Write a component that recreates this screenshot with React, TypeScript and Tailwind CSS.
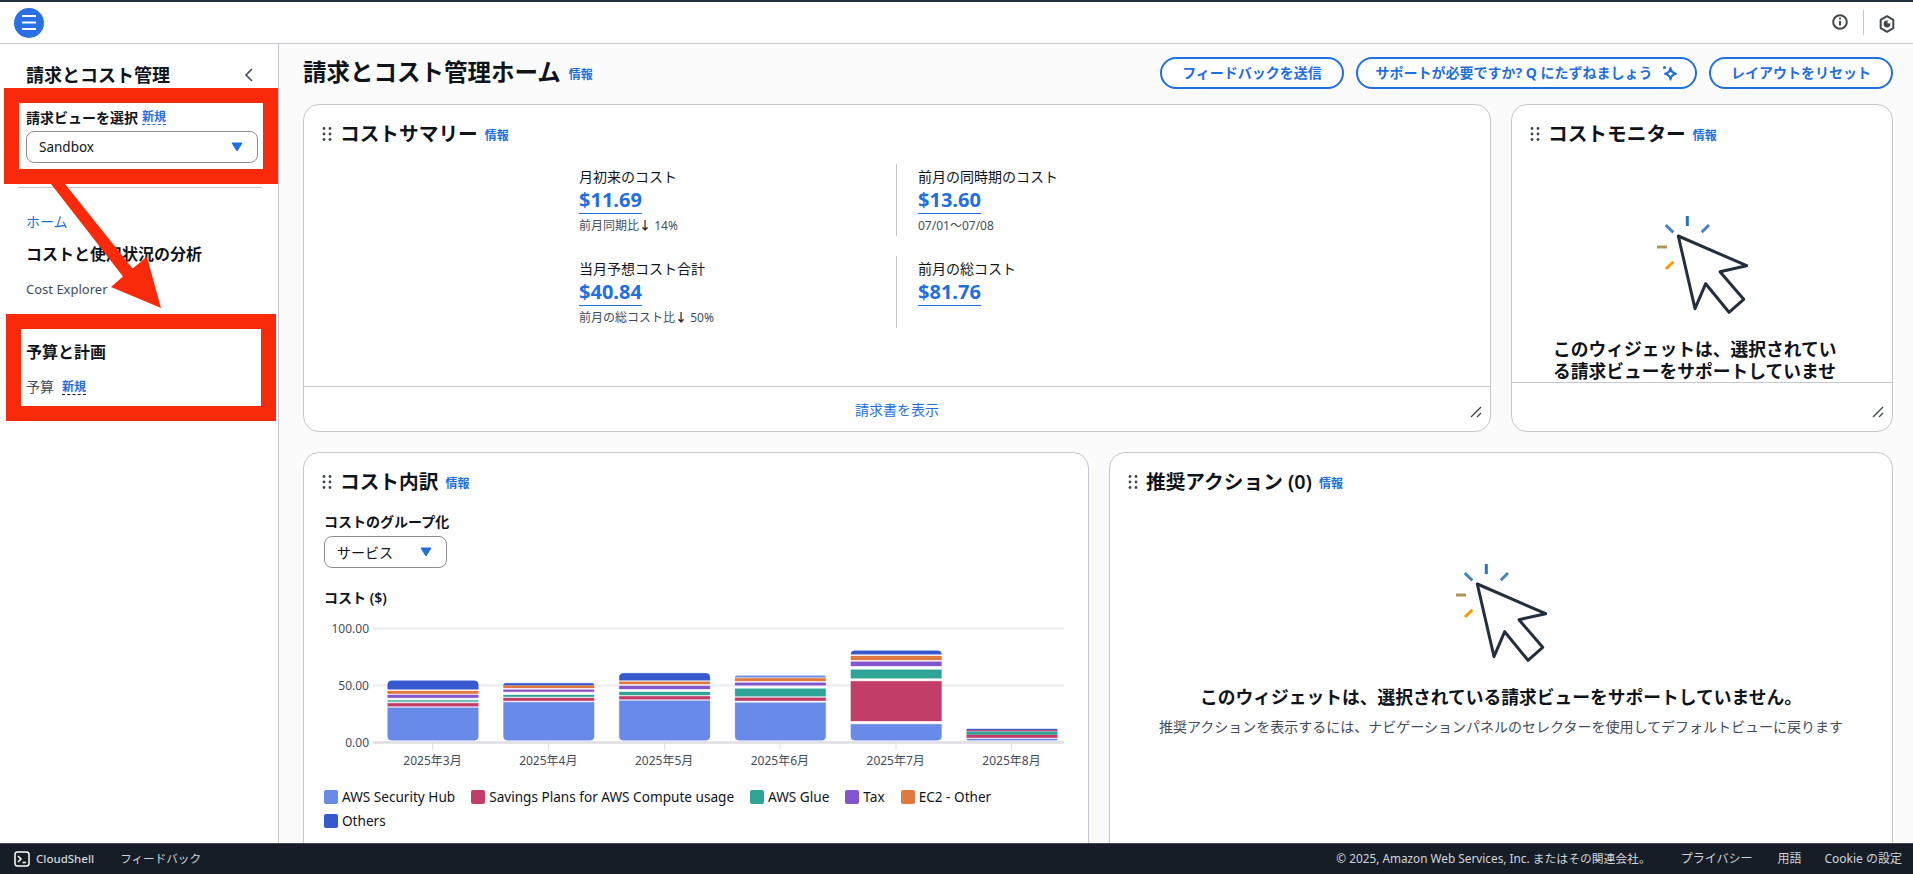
const JP = "font-['Noto_Sans','Noto_Sans_CJK_JP',sans-serif]";

function Dots() {
  return (
    <svg width="10" height="14" viewBox="0 0 10 14" className="shrink-0">
      {[1.5, 7, 12.5].map((y) => (
        <g key={y}>
          <circle cx="2" cy={y} r="1.4" fill="#424650" />
          <circle cx="8" cy={y} r="1.4" fill="#424650" />
        </g>
      ))}
    </svg>
  );
}

function Info({ className = "" }: { className?: string }) {
  return <span className={"text-[12px] font-bold leading-4 text-[#1f6fe0] " + className}>情報</span>;
}

function CardHead({ title }: { title: string }) {
  return (
    <div className="flex items-center pl-[18px] pt-[13px] h-[44px] shrink-0">
      <Dots />
      <h2 className="ml-[8px] text-[19.7px] leading-7 font-semibold text-[#0f141a]">{title}</h2>
      <Info className="ml-[7px] mt-[5px]" />
    </div>
  );
}

function Caret() {
  return (
    <svg width="12" height="10" viewBox="0 0 12 10">
      <path d="M1 1h10L6 9z" fill="#1f6fe0" stroke="#1f6fe0" strokeLinejoin="round" />
    </svg>
  );
}

function Resize() {
  return (
    <svg width="12" height="12" viewBox="0 0 12 12" className="absolute right-[8px] bottom-[13px]">
      <path d="M1 11L11 1M7 11l4-4" stroke="#424650" strokeWidth="1.4" fill="none" />
    </svg>
  );
}

function Clicker() {
  return (
    <svg width="92" height="100" viewBox="0 0 92 100" className="shrink-0">
      <path d="M31.3 1v10" stroke="#2374d1" strokeWidth="3" />
      <path d="M9.7 10l7.6 7.3M53 10l-7.3 7.3" stroke="#4a82c0" strokeWidth="3" />
      <path d="M1 32h10" stroke="#b0935e" strokeWidth="3" />
      <path d="M17.3 46.7L10 54" stroke="#ff9900" strokeWidth="3" />
      <path
        d="M22.3 21L90.7 50.7 64 56.7 87.7 84.3 73 97.3 49.7 68.7 39 93.7z"
        fill="none"
        stroke="#232f3e"
        strokeWidth="3"
        strokeLinejoin="round"
      />
    </svg>
  );
}

function Stat({ label, value, sub, arrow }: { label: string; value: string; sub?: string; arrow?: string }) {
  return (
    <div className="h-[72px] pt-[4px]">
      <div className="text-[14px] leading-[18px] text-[#0f141a]">{label}</div>
      <div className="flex">
        <div className="text-[20px] leading-[27px] font-bold text-[#1f6fe0] border-b-[1.5px] border-[#1f6fe0] h-[28px]">{value}</div>
      </div>
      {sub && (
        <div className="text-[12px] leading-4 mt-[4px] text-[#414d5c]">
          {sub}
          {arrow && <span className="font-bold text-[#232f3e]">↓</span>}
          {arrow}
        </div>
      )}
    </div>
  );
}

type Seg = [string, number, number];
const C = { s: "#688ae8", r: "#c33d69", t: "#2ea597", p: "#8456ce", o: "#e07941", b: "#3759ce" };
const bars: { x: number; w: number; segs: Seg[] }[] = [
  { x: 387.7, w: 90.6, segs: [[C.b, 680.7, 689.3], [C.o, 691, 693.7], [C.p, 695, 697.7], ["#74c4ba", 700, 702], [C.r, 703.3, 706.3], [C.s, 707.7, 740.3]] },
  { x: 503.5, w: 90.6, segs: [[C.b, 683.3, 685.3], [C.o, 685.7, 688], [C.p, 689.7, 691.7], [C.t, 695, 696.7], [C.r, 698, 700.7], [C.s, 702.3, 740.3]] },
  { x: 619.3, w: 90.6, segs: [[C.b, 673.3, 680.3], [C.o, 681.7, 684], [C.p, 686, 689], [C.t, 692, 695], [C.r, 696.3, 699.3], [C.s, 700.7, 740.3]] },
  { x: 735.1, w: 90.6, segs: [[C.s, 675.7, 677.3], [C.o, 678.3, 681], [C.p, 682.7, 685.3], [C.t, 688.7, 696.3], [C.r, 697.7, 700.7], [C.s, 702.7, 740.3]] },
  { x: 850.9, w: 90.6, segs: [[C.b, 650.7, 654.3], [C.o, 656, 660], [C.p, 661.7, 666], [C.t, 669.7, 678.3], [C.r, 681.3, 721], [C.s, 724.3, 740.3]] },
  { x: 966.7, w: 90.6, segs: [[C.b, 729, 729.9], [C.r, 730.3, 731.2], [C.t, 731.7, 734.7], [C.r, 735, 737.7], [C.s, 739, 740.3]] },
];

function segPath(x: number, w: number, y0: number, y1: number, top: boolean, bottom: boolean) {
  const rt = top ? Math.min(4, y1 - y0) : 0;
  const rb = bottom ? Math.min(4, y1 - y0) : 0;
  return `M${x + rt} ${y0}H${x + w - rt}Q${x + w} ${y0} ${x + w} ${y0 + rt}V${y1 - rb}Q${x + w} ${y1} ${x + w - rb} ${y1}H${x + rb}Q${x} ${y1} ${x} ${y1 - rb}V${y0 + rt}Q${x} ${y0} ${x + rt} ${y0}Z`;
}

function Chart() {
  const X0 = 324;
  const Y0 = 618;
  const yLabels: [string, number][] = [["100.00", 628], ["50.00", 685], ["0.00", 742]];
  const months = ["2025年3月", "2025年4月", "2025年5月", "2025年6月", "2025年7月", "2025年8月"];
  return (
    <svg width="745" height="156" viewBox={`${X0} ${Y0} 745 156`} className="block mt-[10px]">
      <path d="M373 628.5H1064M373 685.5H1064" stroke="#ebebf0" strokeWidth="2" />
      {bars.map((b) =>
        b.segs.map(([c, y0, y1], i) => (
          <path
            key={b.x + "-" + i}
            d={segPath(b.x, b.w, y0, y1, i === 0, i === b.segs.length - 1)}
            fill={c}
            stroke={c}
            strokeOpacity="0.35"
            strokeWidth="1"
          />
        ))
      )}
      <path d="M373 742.5H1064" stroke="#dedee3" strokeWidth="2.5" />
      {[432.5, 548.5, 664.5, 780, 896, 1011.5].map((x) => (
        <path key={x} d={`M${x} 743V750`} stroke="#dedee3" strokeWidth="1" />
      ))}
      {yLabels.map(([t, y]) => (
        <text key={t} x="369" y={y + 5} textAnchor="end" fontSize="12" fill="#414d5c" fontFamily="'Noto Sans','Noto Sans CJK JP',sans-serif">
          {t}
        </text>
      ))}
      {months.map((t, i) => (
        <text key={t} x={432.5 + i * 115.8} y="765" textAnchor="middle" fontSize="12" fill="#414d5c" fontFamily="'Noto Sans','Noto Sans CJK JP',sans-serif">
          {t}
        </text>
      ))}
    </svg>
  );
}

function Legend({ c, t }: { c: string; t: string }) {
  return (
    <div className="flex items-center gap-[4px] h-[14px]">
      <span className="w-[14px] h-[14px] rounded-[2px]" style={{ background: c }} />
      <span className="text-[13.6px] leading-[14px] text-[#0f141a]">{t}</span>
    </div>
  );
}

function OutlineBtn({ children, className = "" }: { children: React.ReactNode; className?: string }) {
  return (
    <button className={"h-[32px] rounded-[20px] border-2 border-[#1f6fe0] bg-white text-[14px] font-bold text-[#1f6fe0] flex items-center justify-center " + className}>
      {children}
    </button>
  );
}

export default function App() {
  return (
    <div className={JP + " relative h-[874px] w-[1913px] overflow-hidden flex flex-col bg-white"}>
      <header className="h-[44px] shrink-0 border-t-2 border-t-[#232f3e] border-b border-b-[#c6c6cd] flex items-center justify-between pl-[14px] pr-[18px]">
        <div className="w-[30px] h-[30px] rounded-full bg-[#2a6fe3] flex items-center justify-center">
          <svg width="14" height="15" viewBox="0 0 14 15">
            <path d="M0 1h14M0 7.5h14M0 14h14" stroke="#fff" strokeWidth="2" />
          </svg>
        </div>
        <div className="flex items-center">
          <svg width="16" height="16" viewBox="0 0 16 16" className="-mt-[2px]">
            <circle cx="8" cy="8" r="6.8" fill="none" stroke="#424650" strokeWidth="2" />
            <path d="M8 7v4.5" stroke="#424650" strokeWidth="2" fill="none" />
            <circle cx="8" cy="4.6" r="1.1" fill="#424650" />
          </svg>
          <span className="w-px h-[25px] bg-[#c6c6cd] ml-[15px] mr-[15px]" />
          <svg width="16" height="18" viewBox="0 0 16 18" className="mt-[2px]">
            <path d="M8 1.2l6.3 3.6v8.4L8 16.8l-6.3-3.6V4.8z" fill="none" stroke="#424650" strokeWidth="2" strokeLinejoin="round" />
            <circle cx="8" cy="9" r="3.4" fill="#424650" />
            <path d="M8.6 8.4L8.6 6 11.4 6 11.4 8.4z" fill="#fff" />
          </svg>
        </div>
      </header>

      <div className="flex-1 flex min-h-0">
        <aside className="w-[279px] shrink-0 border-r border-[#c6c6cd] bg-white pl-[26px] overflow-hidden">
          <div className="flex items-center justify-between pr-[24px] mt-[19px] h-[24px]">
            <div className="text-[18px] leading-6 font-semibold text-[#0f141a]">請求とコスト管理</div>
            <svg width="10" height="16" viewBox="0 0 10 16">
              <path d="M8 2L2 8l6 6" stroke="#424650" strokeWidth="1.6" fill="none" />
            </svg>
          </div>

          <div className="mt-[1px] border-[15px] border-[#f92a0a] -ml-[22px] w-[274px] h-[96px] pl-[7px] pt-[4px] bg-white">
            <div className="flex items-center h-[20px] text-[14px] font-bold text-[#0f141a]">
              請求ビューを選択
              <span className="ml-[4px] text-[12px] text-[#1f6fe0] border-b border-dashed border-[#1f6fe0] leading-[14px]">新規</span>
            </div>
            <div className="mt-[4px] w-[232px] h-[32px] border border-[#8c8c94] rounded-[8px] flex items-center justify-between pl-[12px] pr-[14px] text-[13.5px] text-[#0f141a]">
              Sandbox
              <Caret />
            </div>
          </div>

          <div className="mt-[3px] -ml-[8px] w-[244px] h-px bg-[#c6c6cd]" />
          <div className="mt-[24px] text-[14px] leading-5 text-[#1f6fe0]">ホーム</div>
          <div className="mt-[12px] text-[16px] leading-[20px] font-semibold text-[#0f141a]">コストと使用状況の分析</div>
          <div className="mt-[15px] text-[13px] leading-5 text-[#414d5c]">Cost Explorer</div>
          <div className="mt-[12px] -mb-[17px] text-[13px] leading-5 text-[#414d5c] whitespace-nowrap">
            Cost Explorer <span className="text-[14px]">保存済みレポート</span>
          </div>

          <div className="relative -ml-[20px] w-[270px] h-[107px] border-[15px] border-[#f92a0a] bg-white pl-[5px]">
            <div className="mt-[13px] text-[16px] leading-5 font-semibold text-[#0f141a]">予算と計画</div>
            <div className="mt-[15px] flex items-center text-[14px] leading-5 text-[#414d5c]">
              予算
              <span className="ml-[8px] text-[12px] font-bold text-[#1f6fe0] border-b border-dashed border-[#0f141a] leading-[14px]">新規</span>
            </div>
          </div>
        </aside>

        <main className="flex-1 min-w-0 bg-[#fbfbfb] pl-[24px] pr-[20px] overflow-hidden">
          <div className="flex items-center justify-between h-[60px]">
            <div className="flex items-center mt-[-5px]">
              <h1 className="text-[23.5px] leading-8 font-semibold text-[#0f141a]">請求とコスト管理ホーム</h1>
              <Info className="ml-[8px] mt-[6px]" />
            </div>
            <div className="flex gap-[12px] mt-[-3px]">
              <OutlineBtn className="w-[184px]">フィードバックを送信</OutlineBtn>
              <OutlineBtn className="w-[341px]">
                サポートが必要ですか? Q にたずねましょう
                <svg width="18" height="18" viewBox="0 0 18 18" className="ml-[7px]">
                  <path d="M10.5 4C11 7.6 12.2 9 16 9.8 12.2 10.6 11 12 10.5 15.6 10 12 8.8 10.6 5 9.8 8.8 9 10 7.6 10.5 4z" fill="none" stroke="#1f6fe0" strokeWidth="2" strokeLinejoin="round" />
                  <circle cx="4.5" cy="3.5" r="1.6" fill="#1f6fe0" />
                </svg>
              </OutlineBtn>
              <OutlineBtn className="w-[184px]">レイアウトをリセット</OutlineBtn>
            </div>
          </div>

          <div className="flex gap-[20px]">
            <section className="relative w-[1188px] h-[328px] rounded-[16px] border border-[#c6c6cd] bg-white flex flex-col">
              <CardHead title="コストサマリー" />
              <div className="flex-1 pl-[275px] pt-[15px]">
                <div className="flex">
                  <div className="w-[318px] border-r border-[#c6c6cd] h-[72px]"><Stat label="月初来のコスト" value="$11.69" sub="前月同期比" arrow=" 14%" /></div>
                  <div className="pl-[21px]"><Stat label="前月の同時期のコスト" value="$13.60" sub="07/01～07/08" /></div>
                </div>
                <div className="flex mt-[20px]">
                  <div className="w-[318px] border-r border-[#c6c6cd] h-[72px]"><Stat label="当月予想コスト合計" value="$40.84" sub="前月の総コスト比" arrow=" 50%" /></div>
                  <div className="pl-[21px]"><Stat label="前月の総コスト" value="$81.76" /></div>
                </div>
              </div>
              <div className="h-[45px] border-t border-[#c6c6cd] flex items-center justify-center text-[14px] text-[#1f6fe0]">請求書を表示</div>
              <Resize />
            </section>

            <section className="relative flex-1 h-[328px] rounded-[16px] border border-[#c6c6cd] bg-white flex flex-col">
              <CardHead title="コストモニター" />
              <div className="flex-1 min-h-0 overflow-hidden pt-[66px] flex flex-col">
                <div className="flex justify-center"><Clicker /></div>
                <div className="mt-[23px] px-[41px] text-[17.75px] leading-[22px] font-semibold text-[#0f141a]">
                  このウィジェットは、選択されている請求ビューをサポートしていません。
                </div>
              </div>
              <div className="h-[49px] border-t border-[#c6c6cd] shrink-0" />
              <Resize />
            </section>
          </div>

          <div className="flex gap-[20px] mt-[20px]">
            <section className="w-[786px] h-[500px] rounded-[16px] border border-[#c6c6cd] bg-white">
              <CardHead title="コスト内訳" />
              <div className="pl-[20px] pt-[15px]">
                <div className="text-[14px] leading-5 font-semibold text-[#0f141a]">コストのグループ化</div>
                <div className="mt-[4px] w-[123px] h-[32px] border border-[#8c8c94] rounded-[8px] flex items-center justify-between pl-[12px] pr-[14px] text-[14px] text-[#0f141a]">
                  サービス
                  <Caret />
                </div>
                <div className="mt-[20px] text-[14px] leading-5 font-semibold text-[#0f141a]">コスト ($)</div>
                <Chart />
                <div className="mt-[16px] flex flex-col gap-y-[10px]">
                  <div className="flex gap-x-[16px]">
                    <Legend c={C.s} t="AWS Security Hub" />
                    <Legend c={C.r} t="Savings Plans for AWS Compute usage" />
                    <Legend c={C.t} t="AWS Glue" />
                    <Legend c={C.p} t="Tax" />
                    <Legend c={C.o} t="EC2 - Other" />
                  </div>
                  <div className="flex">
                    <Legend c={C.b} t="Others" />
                  </div>
                </div>
              </div>
            </section>

            <section className="flex-1 h-[500px] rounded-[16px] border border-[#c6c6cd] bg-white">
              <CardHead title="推奨アクション (0)" />
              <div className="pt-[66px] flex flex-col items-center">
                <Clicker />
                <div className="mt-[23px] text-[17.75px] leading-[22px] font-semibold text-[#0f141a]">このウィジェットは、選択されている請求ビューをサポートしていません。</div>
                <div className="mt-[9px] text-[14px] leading-5 text-[#414d5c]">推奨アクションを表示するには、ナビゲーションパネルのセレクターを使用してデフォルトビューに戻ります</div>
              </div>
            </section>
          </div>
        </main>
      </div>

      <footer className="h-[31px] shrink-0 bg-[#161d26] border-t border-[#424650] flex items-center justify-between pl-[14px] pr-[11px] text-[12px] text-[#d1d5db]">
        <div className="flex items-center">
          <svg width="16" height="16" viewBox="0 0 16 16">
            <rect x="1" y="1" width="14" height="14" rx="2.5" fill="none" stroke="#fff" strokeWidth="1.5" />
            <path d="M4 5l3 3-3 3M8.5 11.5H12" stroke="#fff" strokeWidth="1.5" fill="none" />
          </svg>
          <span className="ml-[6px] font-medium text-[11.5px]">CloudShell</span>
          <span className="ml-[26px] text-[11.6px]">フィードバック</span>
        </div>
        <div className="flex items-center">
          <span className="text-[11.8px]">© 2025, Amazon Web Services, Inc. またはその関連会社。</span>
          <span className="ml-[30px]">プライバシー</span>
          <span className="ml-[25px]">用語</span>
          <span className="ml-[23px]">Cookie の設定</span>
        </div>
      </footer>

      <svg width="200" height="150" viewBox="0 0 200 150" className="absolute left-0 top-[175px] pointer-events-none">
        <path d="M51 9L65 9 132.6 93.5 147 82 161 133 111 112 123 101.5z" fill="#f92a0a" />
      </svg>
    </div>
  );
}
